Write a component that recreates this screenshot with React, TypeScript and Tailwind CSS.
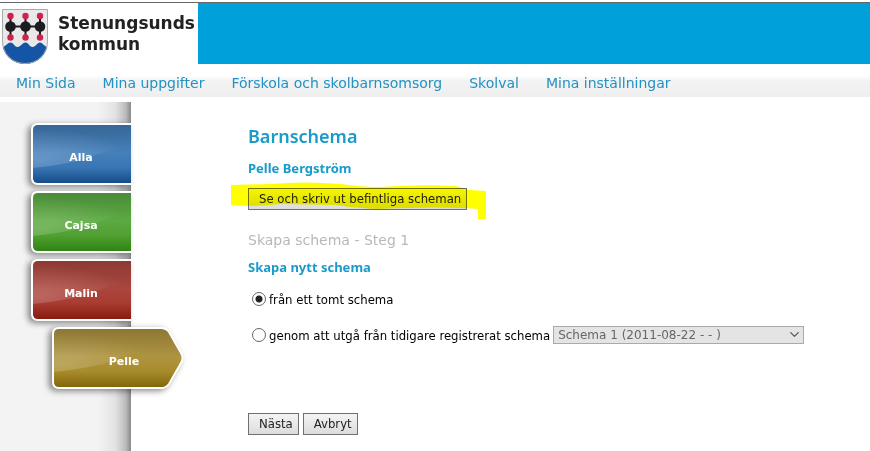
import { useState } from 'react'
import clsx from 'clsx'
import { ChevronDown } from 'lucide-react'

const menuItems = ['Min Sida', 'Mina uppgifter', 'Förskola och skolbarnsomsorg', 'Skolval', 'Mina inställningar']

const children = [
  { name: 'Alla', stops: ['#356594', '#4680ba', '#3a76b4', '#124a85'] },
  { name: 'Cajsa', stops: ['#4a8a38', '#5caa42', '#50a032', '#2c8210'] },
  { name: 'Malin', stops: ['#8c3a34', '#aa463e', '#a83c32', '#86180e'] },
  { name: 'Pelle', stops: ['#8c7634', '#ae9440', '#a88c2c', '#806408'] },
]

const buttonClass =
  'h-[22px] border border-[#707070] bg-linear-to-b from-[#f4f4f4] to-[#dcdcdc] pl-[10px] pr-[5px] text-[13px] leading-5 whitespace-nowrap text-[#222]'

const radioClass =
  'size-[14px] shrink-0 appearance-none rounded-full border border-[#666] bg-white checked:bg-[radial-gradient(circle,#222_0_3px,transparent_4px)]'

const Crest = () => (
  <svg viewBox="0 0 46 55" className="h-[55px] w-[46px]" aria-hidden="true">
    <defs>
      <clipPath id="shield">
        <path d="M0 0H46V32C46 45 36 55 23 55S0 45 0 32Z" />
      </clipPath>
    </defs>
    <g clipPath="url(#shield)">
      <path d="M0 0H46V55H0Z" fill="#e9e9e9" />
      <path d="M0 38C4 38 5 33.500 8.500 33.500S12 38 15.500 38S20 33.500 23.500 33.500S27 38 30.500 38S35 33.500 38 33.500S42 38 46 38V55H0Z" fill="#1455a5" />
    </g>
    <path d="M.5 .5H45.500V32C45.500 44.500 36 54.500 23 54.500S.5 44.500 .5 32Z" fill="none" stroke="#aaa" />
    <path d="M8.500 17.500H38M8.500 7V28M23.500 7V28M38 7V28" stroke="#1c1c1e" strokeWidth="2" />
    {[8.5, 23.5, 38].map(x => (
      <g key={x}>
        <circle cx={x} cy="17.500" r="5.300" fill="#1c1c1e" />
        <circle cx={x} cy="7" r="3.200" fill="#d0214c" />
        <circle cx={x} cy="28.500" r="3.200" fill="#d0214c" />
      </g>
    ))}
  </svg>
)

const TabShape = ({ id, stops, active }: { id: string; stops: string[]; active: boolean }) => {
  const outline = active
    ? 'M7 1H109Q114 1 117 5L129 26Q132 31 129 36L117 57Q114 61 109 61H7Q1 61 1 55V7Q1 1 7 1Z'
    : 'M104 1H7Q1 1 1 7V55Q1 61 7 61H104Z'
  return (
    <svg
      viewBox={active ? '0 0 132 62' : '0 0 100 62'}
      className={clsx('absolute inset-0 h-full w-full', active && 'overflow-visible')}
      aria-hidden="true"
    >
      <defs>
        <linearGradient id={`fill-${id}`} x2="0" y2="1">
          <stop offset="0" stopColor={stops[0]} />
          <stop offset=".48" stopColor={stops[1]} />
          <stop offset=".72" stopColor={stops[2]} />
          <stop offset="1" stopColor={stops[3]} />
        </linearGradient>
        <radialGradient id={`shine-${id}`} gradientUnits="userSpaceOnUse" cx="0" cy="0" r="1" gradientTransform="translate(8 38) scale(95 32)">
          <stop offset="0" stopColor="#fff" stopOpacity=".2" />
          <stop offset="1" stopColor="#fff" stopOpacity="0" />
        </radialGradient>
      </defs>
      <path d={outline} fill={`url(#fill-${id})`} />
      <path d="M2 2H100V24Q78 26 62 33T2 45Z" fill={`url(#shine-${id})`} />
      <path d={outline} fill="none" stroke="#fff" strokeWidth="2" />
    </svg>
  )
}

export default function App() {
  const [selected, setSelected] = useState('Pelle')
  const [source, setSource] = useState('empty')

  return (
    <div className="flex min-h-screen flex-col bg-white font-['DejaVu_Sans_Condensed','DejaVu_Sans',sans-serif] text-[13px] text-black">
      <header className="mt-[2px] flex h-[62px] border-t border-[#666]">
        <div className="flex w-[198px] shrink-0 items-start gap-[10px] pt-[6px] pl-[2px]">
          <Crest />
          <div className="pt-1 font-['DejaVu_Sans',sans-serif] text-[17px] leading-[21px] font-bold text-[#222]">
            Stenungsunds
            <br />
            kommun
          </div>
        </div>
        <div className="grow bg-[#00a0da]" />
      </header>

      <nav className="mb-[5px] flex h-[33px] items-center gap-[27px] bg-linear-to-b from-white from-35% via-[#f3f3f3] via-50% to-[#eee] pt-[5px] pl-4 font-['DejaVu_Sans',sans-serif] text-[14px] whitespace-nowrap text-[#2292c4]">
        {menuItems.map(item => (
          <a key={item} href="#">{item}</a>
        ))}
      </nav>

      <div className="flex grow">
        <aside className="flex w-[131px] shrink-0 flex-col items-end gap-[6px] bg-[linear-gradient(to_right,#f3f3f3_75%,#e3e3e3_88%,#bbb_96%,#888)] pt-[21px]">
          {children.map(child => {
            const active = child.name === selected
            return (
              <button
                key={child.name}
                onClick={() => setSelected(child.name)}
                className={clsx(
                  "relative h-[62px] shrink-0 pt-2 font-['DejaVu_Sans',sans-serif] text-[11px] font-bold text-white drop-shadow-[-3px_2px_3px_#0007]",
                  active ? '-mr-[53px] w-[132px] pl-3' : 'w-[100px]'
                )}
              >
                <TabShape id={child.name} stops={child.stops} active={active} />
                <span className="relative">{child.name}</span>
              </button>
            )
          })}
        </aside>

        <main className="grow pt-[22px] pl-[117px]">
          <h1 className="font-['Noto_Sans',sans-serif] text-[18px] leading-6 font-semibold text-[#189aca]">Barnschema</h1>
          <h2 className="mt-[10px] font-['Noto_Sans',sans-serif] text-[13px] leading-5 font-bold text-[#189aca]">Pelle Bergström</h2>
          <div className="relative mt-[10px] w-fit">
            <button className={buttonClass}>Se och skriv ut befintliga scheman</button>
            <svg
              viewBox="0 0 256 38"
              className="pointer-events-none absolute -top-[6px] -left-[17px] h-[38px] w-[256px] mix-blend-multiply"
              aria-hidden="true"
            >
              <path
                d="M0 3L39 2Q75 -1 110 2Q130 5 148 5Q190 2 225 4L238 8L255 9V37H247V27Q210 24 148 27Q125 26 105 23L50 22Q24 25 0 23Z"
                fill="#ff0"
              />
            </svg>
          </div>

          <h3 className="mt-[20px] font-['DejaVu_Sans',sans-serif] text-[14px] leading-5 text-[#b8b8b8]">Skapa schema - Steg 1</h3>
          <h2 className="mt-[7px] font-['Noto_Sans',sans-serif] text-[13px] leading-5 font-bold text-[#189aca]">Skapa nytt schema</h2>

          <div className="mt-[12px] ml-1 flex h-5 items-center gap-[3px]">
            <input id="empty" type="radio" name="source" className={radioClass} checked={source === 'empty'} onChange={() => setSource('empty')} />
            <label htmlFor="empty" className="pt-[2px]">från ett tomt schema</label>
          </div>
          <div className="mt-[16px] ml-1 flex h-5 items-center gap-[3px]">
            <input id="previous" type="radio" name="source" className={radioClass} checked={source === 'previous'} onChange={() => setSource('previous')} />
            <label htmlFor="previous" className="pt-[2px] whitespace-nowrap">genom att utgå från tidigare registrerat schema</label>
            <div className="relative">
              <select
                aria-label="Tidigare registrerat schema"
                disabled={source === 'empty'}
                className="h-[18px] w-[251px] appearance-none border border-[#aaa] bg-[#e4e4e4] pl-1 font-['DejaVu_Sans',sans-serif] text-[12px] leading-4 text-[#666]"
              >
                <option>Schema 1 (2011-08-22 - - )</option>
              </select>
              <ChevronDown className="pointer-events-none absolute top-[2px] right-[2px] size-[15px] text-[#555]" />
            </div>
          </div>

          <div className="mt-[68px] flex gap-1">
            <button className={buttonClass}>Nästa</button>
            <button className={buttonClass}>Avbryt</button>
          </div>
        </main>
      </div>
    </div>
  )
}
